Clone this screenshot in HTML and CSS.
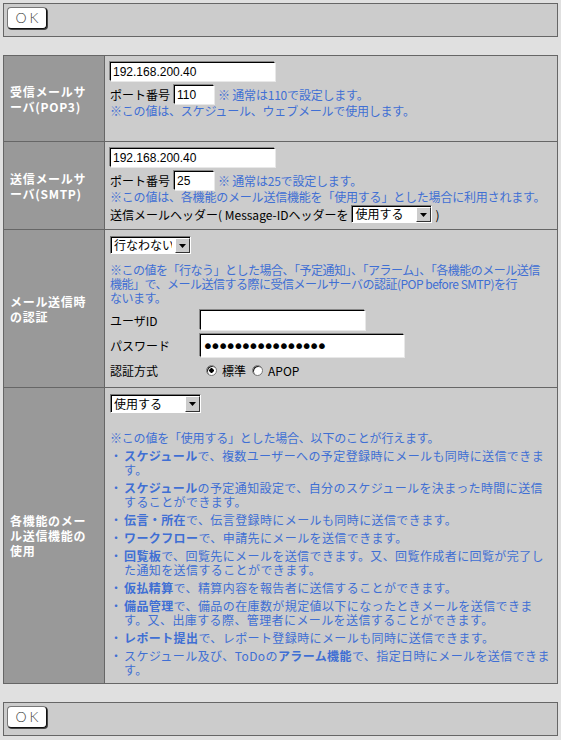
FILE: index.html
```html
<!DOCTYPE html>
<html lang="ja">
<head>
  <meta charset="UTF-8" />
  <title>メールサーバ設定</title>
  <link rel="stylesheet" href="styles.css">
</head>
<body>
<form>

  <div class="button-bar">
    <button type="button" class="ok-btn">OK</button>
  </div>

  <table class="settings">
    <tr>
      <th>受信メールサーバ(POP3)</th>
      <td class="cell-pop">
        <input type="text" class="text-field host" value="192.168.200.40">
        <div class="port-line">
          <span>ポート番号</span>
          <input type="text" class="text-field port" value="110">
          <span class="note">※ 通常は110で設定します。</span>
        </div>
        <div class="note">※この値は、スケジュール、ウェブメールで使用します。</div>
      </td>
    </tr>

    <tr>
      <th>送信メールサーバ(SMTP)</th>
      <td>
        <input type="text" class="text-field host" value="192.168.200.40">
        <div class="port-line">
          <span>ポート番号</span>
          <input type="text" class="text-field port" value="25">
          <span class="note">※ 通常は25で設定します。</span>
        </div>
        <div class="note">※この値は、各機能のメール送信機能を「使用する」とした場合に利用されます。</div>
        <div class="header-line">
          <span>送信メールヘッダー( Message-IDヘッダーを</span>
          <span class="dropdown header-select">
            <select><option>使用する</option><option>使用しない</option></select>
            <span class="drop-btn"><svg width="7" height="4" viewBox="0 0 7 4"><path d="M0 0h7L3.5 4z" fill="#000"/></svg></span>
          </span>
          <span>)</span>
        </div>
      </td>
    </tr>

    <tr>
      <th>メール送信時の認証</th>
      <td>
        <span class="dropdown auth-select">
          <select><option>行なわない</option><option>行なう</option></select>
          <span class="drop-btn"><svg width="7" height="4" viewBox="0 0 7 4"><path d="M0 0h7L3.5 4z" fill="#000"/></svg></span>
        </span>
        <p class="note tight">※この値を「行なう」とした場合、「予定通知」、「アラーム」、「各機能のメール送信<br>機能」で、メール送信する際に受信メールサーバの認証(POP before SMTP)を行<br>ないます。</p>
        <div class="auth-grid">
          <span>ユーザID</span>
          <input type="text" class="text-field user" value="">
          <span>パスワード</span>
          <input type="password" class="text-field pass" value="abcdefghijklmnop">
          <span>認証方式</span>
          <span class="radios">
            <label><input type="radio" class="radio" name="auth" checked>標準</label>
            <label><input type="radio" class="radio" name="auth">APOP</label>
          </span>
        </div>
      </td>
    </tr>

    <tr>
      <th>各機能のメール送信機能の使用</th>
      <td>
        <span class="dropdown use-select">
          <select><option>使用する</option><option>使用しない</option></select>
          <span class="drop-btn"><svg width="7" height="4" viewBox="0 0 7 4"><path d="M0 0h7L3.5 4z" fill="#000"/></svg></span>
        </span>
        <p class="note intro">※この値を「使用する」とした場合、以下のことが行えます。</p>
        <ul class="feature-list">
          <li><span class="dot">・</span><span><b>スケジュール</b>で、複数ユーザーへの予定登録時にメールも同時に送信できます。</span></li>
          <li><span class="dot">・</span><span><b>スケジュール</b>の予定通知設定で、自分のスケジュールを決まった時間に送信することができます。</span></li>
          <li><span class="dot">・</span><span><b>伝言・所在</b>で、伝言登録時にメールも同時に送信できます。</span></li>
          <li><span class="dot">・</span><span><b>ワークフロー</b>で、申請先にメールを送信できます。</span></li>
          <li><span class="dot">・</span><span><b>回覧板</b>で、回覧先にメールを送信できます。又、回覧作成者に回覧が完了した通知を送信することができます。</span></li>
          <li><span class="dot">・</span><span><b>仮払精算</b>で、精算内容を報告者に送信することができます。</span></li>
          <li><span class="dot">・</span><span><b>備品管理</b>で、備品の在庫数が規定値以下になったときメールを送信できます。又、出庫する際、管理者にメールを送信することができます。</span></li>
          <li><span class="dot">・</span><span><b>レポート提出</b>で、レポート登録時にメールも同時に送信できます。</span></li>
          <li><span class="dot">・</span><span>スケジュール及び、ToDoの<b>アラーム機能</b>で、指定日時にメールを送信できます。</span></li>
        </ul>
      </td>
    </tr>
  </table>

  <div class="button-bar">
    <button type="button" class="ok-btn">OK</button>
  </div>

</form>
</body>
</html>
```

FILE: styles.css
```css
* {
  box-sizing: border-box;
}

body {
  margin: 3px 3px 4px 3px;
  background: #e0e0e0;
  color: #000;
  font-family: "Noto Sans CJK JP", sans-serif;
  font-size: 12px;
}

/* === OK bars === */
.button-bar {
  background: #ccc;
  border: 1px solid #666;
  padding: 3px 3px 7px;
}

.ok-btn {
  display: block;
  width: 40px;
  height: 22px;
  padding: 0 0 0 3px;
  background: #fff;
  border: 1px solid;
  border-color: #777 #111 #111 #777;
  border-radius: 4px;
  box-shadow: 1px 1px 0 #444;
  color: #444;
  font-family: "Lato", "Liberation Sans", sans-serif;
  font-weight: 300;
  font-size: 14px;
  letter-spacing: 3px;
  line-height: 18px;
}

/* === Settings table === */
.settings {
  width: 100%;
  margin: 18px 0;
  border-collapse: collapse;
  table-layout: fixed;
  background: #ccc;
}

.settings th {
  width: 101px;
  padding: 0 14px 0 6px;
  background: #999;
  border: 1px solid #666;
  color: #fff;
  font-weight: bold;
  text-align: left;
  letter-spacing: 0.7px;
  line-height: 15px;
  vertical-align: middle;
}

.settings td {
  padding: 6px 4px 6px 5px;
  border: 1px solid #666;
  vertical-align: top;
}

.settings td.cell-pop {
  padding-bottom: 23px;
}

/* === Form parts === */
.text-field {
  display: block;
  height: 19px;
  padding: 0 2px;
  background: #fff;
  border: 1px solid;
  border-color: #000 #fff #fff #000;
  box-shadow: -1px -1px 0 #888, 1px 1px 0 #e8e8e8;
  color: #000;
  font-family: "Liberation Sans", sans-serif;
  font-size: 12px;
}

.host {
  width: 165px;
  margin-bottom: 4px;
}

.port {
  width: 40px;
}

.user {
  width: 165px;
  height: 20px;
}

.pass {
  width: 204px;
  height: 23px;
  padding: 0 1px;
  font-family: "DejaVu Sans", sans-serif;
  font-size: 20px;
  letter-spacing: -4.2px;
}

.port-line,
.header-line {
  display: flex;
  align-items: center;
  gap: 4px;
}

.header-line {
  margin-top: 1px;
  gap: 3px;
}

.dropdown {
  position: relative;
  display: inline-block;
  vertical-align: top;
  height: 18px;
}

.dropdown select {
  -webkit-appearance: none;
  appearance: none;
  width: 100%;
  height: 100%;
  padding: 0 18px 0 3px;
  background: #fff;
  border: 1px solid;
  border-color: #777 #fff #fff #777;
  box-shadow: inset 1px 1px 0 #000;
  border-radius: 0;
  color: #000;
  font-family: "Noto Sans CJK JP", sans-serif;
  font-size: 12px;
  line-height: 16px;
}

.drop-btn {
  position: absolute;
  top: 2px;
  right: 1px;
  bottom: 1px;
  width: 15px;
  display: flex;
  align-items: center;
  justify-content: center;
  background: #ccc;
  border: 1px solid;
  border-color: #fff #333 #333 #fff;
  pointer-events: none;
}

.header-select {
  width: 81px;
}

.auth-select {
  width: 81px;
}

.use-select {
  width: 91px;
  height: 19px;
}

/* === Blue notes === */
.note {
  margin: 0;
  color: #3f6fd4;
  letter-spacing: -0.2px;
  line-height: 14px;
}

.note.tight {
  margin-top: 9px;
  letter-spacing: -0.5px;
}

.note.intro {
  margin-top: 18px;
}

.auth-grid {
  display: grid;
  grid-template-columns: 90px auto;
  row-gap: 4px;
  align-items: center;
  justify-items: start;
  margin-top: 5px;
  padding-bottom: 2px;
}

.radios {
  display: flex;
  align-items: center;
  height: 18px;
}

.radios label {
  display: flex;
  align-items: center;
}

.radio {
  -webkit-appearance: none;
  appearance: none;
  width: 11px;
  height: 11px;
  margin: 0 5px 0 6px;
  border-radius: 50%;
  background: #fff;
  border: 1px solid #777;
  box-shadow: inset 1px 1px 0 #222;
}

.radio:checked {
  background: radial-gradient(circle, #000 0 2px, #fff 2.5px);
}

.feature-list {
  margin: 0;
  padding: 0;
  list-style: none;
  color: #3f6fd4;
  letter-spacing: 0.4px;
  text-spacing-trim: space-all;
  line-height: 14px;
}

.feature-list li {
  display: flex;
  margin-top: 4px;
}

.feature-list .dot {
  flex: 0 0 14px;
  letter-spacing: 0;
}
```
